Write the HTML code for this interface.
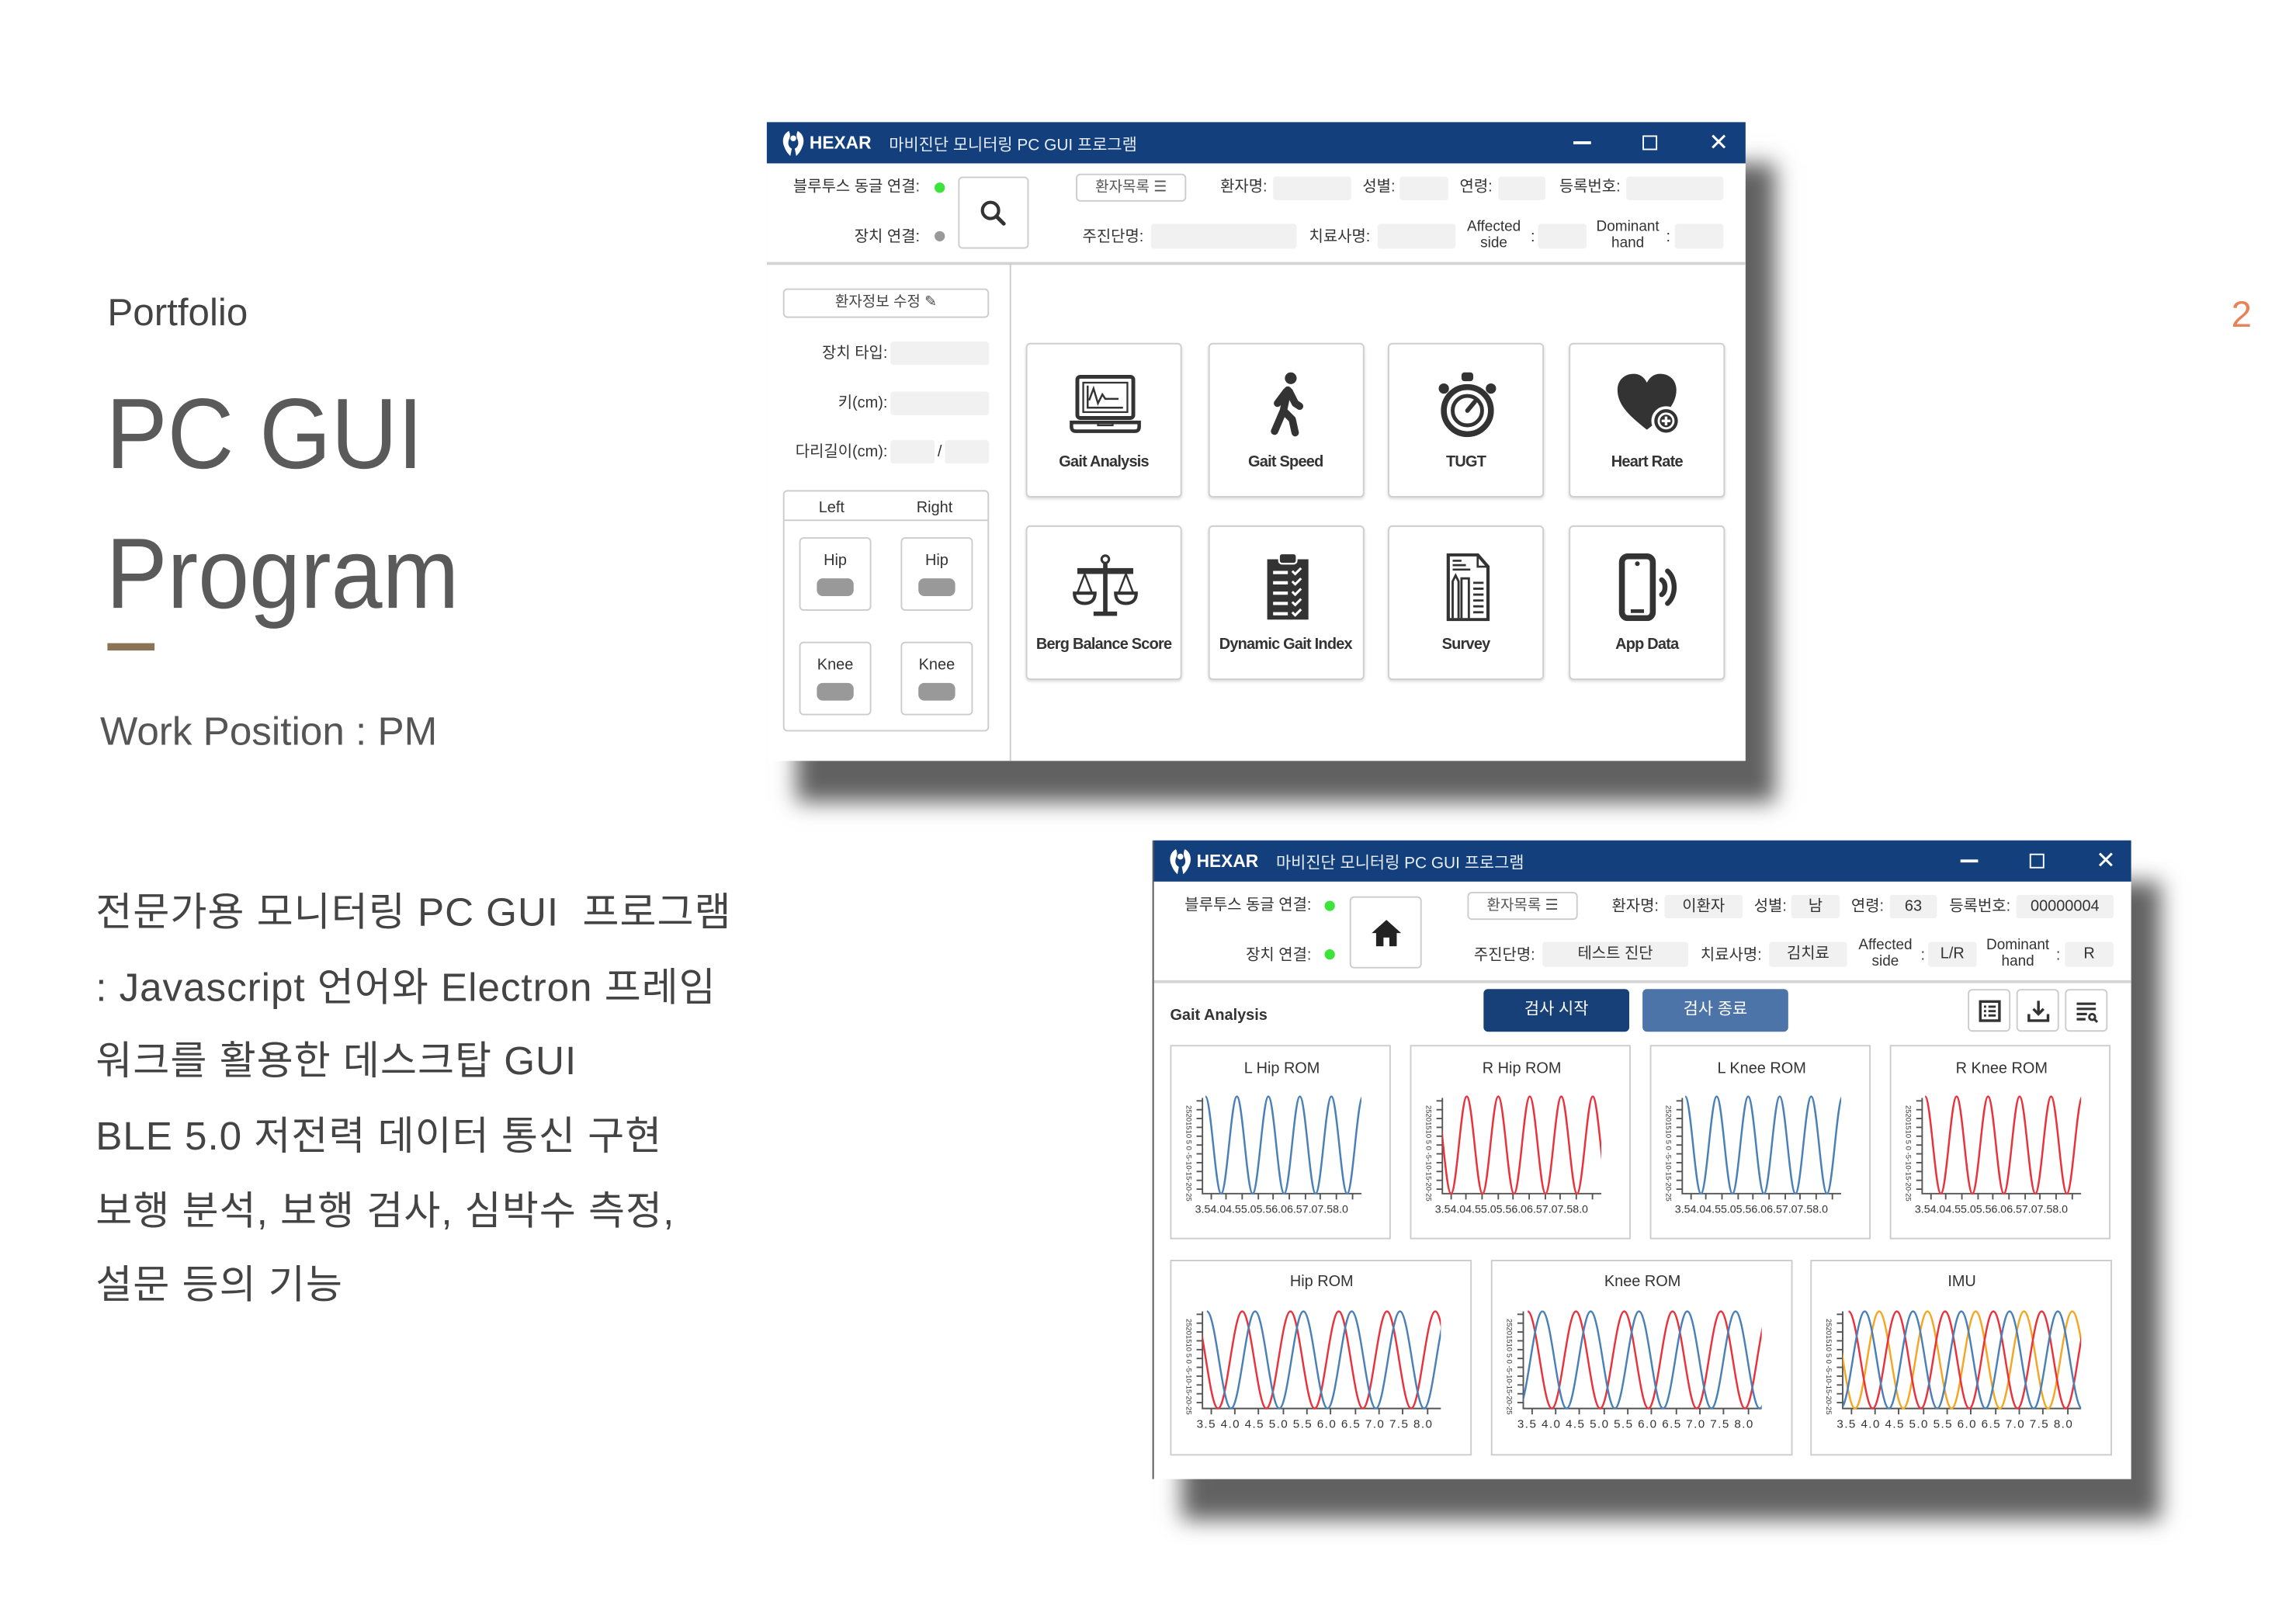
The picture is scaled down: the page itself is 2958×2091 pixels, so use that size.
<!DOCTYPE html>
<html><head><meta charset="utf-8">
<style>
*{margin:0;padding:0;box-sizing:border-box}
html,body{width:2958px;height:2090px;overflow:hidden;background:#fff}
#s{position:absolute;left:0;top:0;width:1560px;height:1103px;transform:scale(1.89615);transform-origin:0 0;font-family:"Liberation Sans","Noto Sans CJK KR",sans-serif;color:#333}
.a{position:absolute}
.w{position:absolute;width:665px;height:434px;background:#fff;box-shadow:20px 28px 14px rgba(0,0,0,.62)}
.tb{position:absolute;left:0;top:0;width:100%;height:28px;background:#143f7d;color:#fff}
.lb{position:absolute;font-size:10.5px;white-space:nowrap;line-height:12px;color:#333}
.r{text-align:right}
.in{position:absolute;background:#f1f1f1;border-radius:2px;font-size:10.5px;text-align:center;color:#333}
.bx{position:absolute;border:1.2px solid #ccc;border-radius:3px;background:#fff}
.tile{position:absolute;width:106px;height:105px;border:1.3px solid #cfcfcf;border-radius:3px;background:#fff;box-shadow:0 1px 2px rgba(0,0,0,.15)}
.tile svg{position:absolute;left:28px;top:18px}
.tile span{position:absolute;left:0;width:100%;top:74px;text-align:center;font-size:10.5px;font-weight:bold;color:#333;letter-spacing:-.4px}
.dot{position:absolute;width:7px;height:7px;border-radius:50%}
.pill{position:absolute;width:25px;height:12px;border-radius:4px;background:#999}
.ch{position:absolute;border:1.3px solid #ccc;background:#fff}
.kr{font-size:27px;color:#444;position:absolute;left:65px;white-space:nowrap;letter-spacing:.5px}
.big{position:absolute;left:72px;font-size:68px;color:#5a5a5a;line-height:80px;transform:scaleX(.92);transform-origin:0 0}
</style></head><body><div id="s">

<div class="a" style="left:73px;top:197px;font-size:26px;color:#444">Portfolio</div>
<div class="big" style="top:255px">PC GUI</div>
<div class="big" style="top:350px">Program</div>
<div class="a" style="left:73px;top:437px;width:32px;height:5px;background:#8b7355"></div>
<div class="a" style="left:68px;top:482px;font-size:27px;color:#555">Work Position : PM</div>
<div class="kr" style="top:598px">전문가용 모니터링 PC GUI &nbsp;프로그램</div>
<div class="kr" style="top:649px">: Javascript 언어와 Electron 프레임</div>
<div class="kr" style="top:699px">워크를 활용한 데스크탑 GUI</div>
<div class="kr" style="top:750px">BLE 5.0 저전력 데이터 통신 구현</div>
<div class="kr" style="top:801px">보행 분석, 보행 검사, 심박수 측정,</div>
<div class="kr" style="top:851px">설문 등의 기능</div>
<div class="a" style="left:1516px;top:200px;font-size:25px;color:#e8825a">2</div>

<!-- WINDOW 1 -->
<div class="w" style="left:521px;top:83px">
 <div class="tb">
  <svg class="a" style="left:10px;top:5px" width="16" height="19" viewBox="0 0 16 19"><path d="M5 1C1 3 0 8 2 12c1 3 3 5 4 6l1-5c-2-1-3-3-2-6 1-2 1-4 0-6zM11 1c4 2 5 7 3 11-1 3-3 5-4 6l-1-5c2-1 3-3 2-6-1-2-1-4 0-6z" fill="#fff"/><circle cx="8" cy="6" r="2" fill="#fff"/></svg>
  <div class="a" style="left:29px;top:7px;font-size:12px;font-weight:bold">HEXAR</div>
  <div class="a" style="left:83px;top:7px;font-size:11px;color:#e8eef8">마비진단 모니터링 PC GUI 프로그램</div>
  <div class="a" style="left:548px;top:13px;width:12px;height:1.5px;background:#fff"></div>
  <div class="a" style="left:595px;top:9px;width:10px;height:10px;border:1.5px solid #fff"></div>
  <div class="a" style="left:640px;top:4px;font-size:16px">✕</div>
 </div>
 <div class="lb r" style="left:0;width:104px;top:38px">블루투스 동글 연결:</div>
 <div class="dot" style="left:114px;top:41px;background:#3be33b"></div>
 <div class="lb r" style="left:0;width:104px;top:72px">장치 연결:</div>
 <div class="dot" style="left:114px;top:74px;background:#999"></div>
 <div class="bx" style="left:130px;top:37px;width:48px;height:49px"><svg class="a" style="left:13px;top:14px" width="20" height="20" viewBox="0 0 20 20"><circle cx="8" cy="8" r="5.5" fill="none" stroke="#333" stroke-width="2.2"/><path d="M12 12l5 5" stroke="#333" stroke-width="2.6" stroke-linecap="round"/></svg></div>
 <div class="bx" style="left:210px;top:35px;width:75px;height:19px;font-size:10px;text-align:center;line-height:17px;color:#555">환자목록 ☰</div>
 <div class="lb r" style="left:290px;width:50px;top:38px">환자명:</div><div class="in" style="left:344px;top:37px;width:53px;height:16px"></div>
 <div class="lb r" style="left:397px;width:30px;top:38px">성별:</div><div class="in" style="left:430px;top:37px;width:33px;height:16px"></div>
 <div class="lb r" style="left:463px;width:30px;top:38px">연령:</div><div class="in" style="left:497px;top:37px;width:32px;height:16px"></div>
 <div class="lb r" style="left:529px;width:51px;top:38px">등록번호:</div><div class="in" style="left:584px;top:37px;width:66px;height:16px"></div>
 <div class="lb r" style="left:200px;width:56px;top:72px">주진단명:</div><div class="in" style="left:261px;top:69px;width:99px;height:17px"></div>
 <div class="lb r" style="left:360px;width:50px;top:72px">치료사명:</div><div class="in" style="left:415px;top:69px;width:53px;height:17px"></div>
 <div class="lb" style="left:474px;width:40px;top:66px;text-align:center;line-height:11px;font-size:10px">Affected<br>side</div><div class="lb" style="left:519px;top:72px">:</div><div class="in" style="left:524px;top:69px;width:33px;height:17px"></div>
 <div class="lb" style="left:562px;width:46px;top:66px;text-align:center;line-height:11px;font-size:10px">Dominant<br>hand</div><div class="lb" style="left:611px;top:72px">:</div><div class="in" style="left:617px;top:69px;width:33px;height:17px"></div>
 <div class="a" style="left:0;top:95px;width:100%;height:1.5px;background:#d4d4d4"></div>
 <div class="a" style="left:165px;top:96px;width:1.2px;height:338px;background:#ccc"></div>
 <div class="bx" style="left:11px;top:113px;width:140px;height:20px;font-size:10px;text-align:center;line-height:18px;color:#444">환자정보 수정 ✎</div>
 <div class="lb r" style="left:0;width:82px;top:151px">장치 타입:</div><div class="in" style="left:84px;top:149px;width:67px;height:16px"></div>
 <div class="lb r" style="left:0;width:82px;top:185px">키(cm):</div><div class="in" style="left:84px;top:183px;width:67px;height:16px"></div>
 <div class="lb r" style="left:0;width:82px;top:218px">다리길이(cm):</div><div class="in" style="left:84px;top:216px;width:30px;height:16px"></div><div class="lb" style="left:116px;top:218px">/</div><div class="in" style="left:121px;top:216px;width:30px;height:16px"></div>
 <div class="bx" style="left:11px;top:250px;width:140px;height:164px">
  <div class="lb" style="left:12px;width:40px;top:5px;text-align:center">Left</div>
  <div class="lb" style="left:82px;width:40px;top:5px;text-align:center">Right</div>
  <div class="a" style="left:0;top:19px;width:138px;height:1.2px;background:#ccc"></div>
  <div class="bx" style="left:10px;top:31px;width:49px;height:50px"><div class="lb" style="width:100%;text-align:center;top:9px">Hip</div><div class="pill" style="left:11px;top:27px"></div></div>
  <div class="bx" style="left:79px;top:31px;width:49px;height:50px"><div class="lb" style="width:100%;text-align:center;top:9px">Hip</div><div class="pill" style="left:11px;top:27px"></div></div>
  <div class="bx" style="left:10px;top:102px;width:49px;height:50px"><div class="lb" style="width:100%;text-align:center;top:9px">Knee</div><div class="pill" style="left:11px;top:27px"></div></div>
  <div class="bx" style="left:79px;top:102px;width:49px;height:50px"><div class="lb" style="width:100%;text-align:center;top:9px">Knee</div><div class="pill" style="left:11px;top:27px"></div></div>
 </div>
 <div class="tile" style="left:176px;top:150px"><svg width="50" height="46" viewBox="0 0 50 46"><rect x="6" y="4" width="38" height="28" rx="2" fill="none" stroke="#333" stroke-width="2.6"/><rect x="10" y="8" width="30" height="20" fill="none" stroke="#333" stroke-width="1.2"/><path d="M13 10v15h24M14 20l3-8 3 10 3-6 2 3h9" fill="none" stroke="#333" stroke-width="1.3"/><path d="M2 35h46v3c0 2-1 3-3 3H5c-2 0-3-1-3-3z" fill="none" stroke="#333" stroke-width="2.4"/><path d="M20 35v2h10v-2" fill="none" stroke="#333" stroke-width="1.2"/></svg><span>Gait Analysis</span></div>
 <div class="tile" style="left:299.5px;top:150px"><svg width="50" height="46" viewBox="0 0 50 46"><circle cx="27" cy="5" r="4" fill="#333"/><path d="M25 13l-3 14-6 14M22 27l6 6 2 9M24 14l-6 8M26 14l4 8 3 2" fill="none" stroke="#333" stroke-width="5" stroke-linecap="round" stroke-linejoin="round"/></svg><span>Gait Speed</span></div>
 <div class="tile" style="left:422px;top:150px"><svg width="50" height="46" viewBox="0 0 50 46"><rect x="21" y="1" width="8" height="6" rx="2" fill="#333"/><circle cx="25" cy="27" r="16" fill="none" stroke="#333" stroke-width="4"/><circle cx="25" cy="27" r="10" fill="none" stroke="#333" stroke-width="2.6"/><path d="M25 27l5-6" stroke="#333" stroke-width="3" stroke-linecap="round"/><circle cx="9" cy="12" r="3.5" fill="#333"/><circle cx="41" cy="12" r="3.5" fill="#333"/></svg><span>TUGT</span></div>
 <div class="tile" style="left:545px;top:150px"><svg width="50" height="46" viewBox="0 0 50 46"><path d="M24 40C14 32 4 24 4 13 4 6 9 2 15 2c4 0 7 2 9 6 2-4 5-6 9-6 6 0 11 4 11 11 0 11-10 19-20 27z" fill="#333"/><circle cx="37" cy="34" r="9" fill="#333" stroke="#fff" stroke-width="2"/><circle cx="37" cy="34" r="5" fill="none" stroke="#fff" stroke-width="1.5"/><path d="M37 31v6M34 34h6" stroke="#fff" stroke-width="1.8"/></svg><span>Heart Rate</span></div>
 <div class="tile" style="left:176px;top:274px"><svg width="50" height="46" viewBox="0 0 50 46"><circle cx="25" cy="4" r="2.5" fill="none" stroke="#333" stroke-width="1.6"/><path d="M25 7v33M17 41h16" stroke="#333" stroke-width="3"/><rect x="6" y="10" width="38" height="4" fill="#333"/><path d="M11 14l-5 13M11 14l5 13M39 14l-5 13M39 14l5 13" stroke="#333" stroke-width="1.3"/><path d="M4 27h14c0 5-3 7-7 7s-7-2-7-7zM32 27h14c0 5-3 7-7 7s-7-2-7-7z" fill="none" stroke="#333" stroke-width="2.2"/></svg><span>Berg Balance Score</span></div>
 <div class="tile" style="left:299.5px;top:274px"><svg width="50" height="46" viewBox="0 0 50 46"><rect x="11" y="4" width="28" height="41" fill="#333"/><rect x="19" y="0" width="12" height="7" rx="2" fill="#333" stroke="#fff" stroke-width="1.2"/><path d="M15 13h10M15 20h10M15 27h10M15 34h10M15 41h10" stroke="#fff" stroke-width="2.2"/><path d="M28 12l2 2 4-4M28 19l2 2 4-4M28 26l2 2 4-4M28 33l2 2 4-4M28 40l2 2 4-4" fill="none" stroke="#fff" stroke-width="1.6"/></svg><span>Dynamic Gait Index</span></div>
 <div class="tile" style="left:422px;top:274px"><svg width="50" height="46" viewBox="0 0 50 46"><path d="M12 1h20l7 8v36H12z" fill="none" stroke="#333" stroke-width="2.2"/><path d="M32 1v8h7M15 5h6M15 8h9M15 11h12" stroke="#333" stroke-width="1.4" fill="none"/><path d="M15 44V19l2-4 2 4v25M21 44V17h5v27M29 20h7M29 24h7M29 28h7M29 32h7M29 36h7M29 40h7" stroke="#333" stroke-width="1.5" fill="none"/></svg><span>Survey</span></div>
 <div class="tile" style="left:545px;top:274px"><svg width="50" height="46" viewBox="0 0 50 46"><rect x="7" y="2" width="21" height="42" rx="4" fill="none" stroke="#333" stroke-width="4"/><circle cx="17.5" cy="7" r="1.6" fill="#333"/><rect x="13" y="38" width="9" height="2.5" fill="#333"/><path d="M34 18c3 2 3 8 0 10M38 12c6 5 6 17 0 22" fill="none" stroke="#333" stroke-width="3.4" stroke-linecap="round"/></svg><span>App Data</span></div>
</div>

<!-- WINDOW 2 -->
<div class="w" style="left:783px;top:571px;border-left:1.3px solid #555">
 <div class="tb">
  <svg class="a" style="left:10px;top:5px" width="16" height="19" viewBox="0 0 16 19"><path d="M5 1C1 3 0 8 2 12c1 3 3 5 4 6l1-5c-2-1-3-3-2-6 1-2 1-4 0-6zM11 1c4 2 5 7 3 11-1 3-3 5-4 6l-1-5c2-1 3-3 2-6-1-2-1-4 0-6z" fill="#fff"/><circle cx="8" cy="6" r="2" fill="#fff"/></svg>
  <div class="a" style="left:29px;top:7px;font-size:12px;font-weight:bold">HEXAR</div>
  <div class="a" style="left:83px;top:7px;font-size:11px;color:#e8eef8">마비진단 모니터링 PC GUI 프로그램</div>
  <div class="a" style="left:548px;top:13px;width:12px;height:1.5px;background:#fff"></div>
  <div class="a" style="left:595px;top:9px;width:10px;height:10px;border:1.5px solid #fff"></div>
  <div class="a" style="left:640px;top:4px;font-size:16px">✕</div>
 </div>
 <div class="lb r" style="left:0;width:107px;top:38px">블루투스 동글 연결:</div>
 <div class="dot" style="left:116px;top:41px;background:#3be33b"></div>
 <div class="lb r" style="left:0;width:107px;top:72px">장치 연결:</div>
 <div class="dot" style="left:116px;top:74px;background:#3be33b"></div>
 <div class="bx" style="left:133px;top:38px;width:49px;height:49px"><svg class="a" style="left:14px;top:15px" width="20" height="18" viewBox="0 0 20 18"><path d="M10 0L0 9h3v9h5v-6h4v6h5V9h3z" fill="#222"/></svg></div>
 <div class="bx" style="left:213px;top:35px;width:75px;height:19px;font-size:10px;text-align:center;line-height:17px;color:#555">환자목록 ☰</div>
 <div class="lb r" style="left:293px;width:50px;top:39px">환자명:</div><div class="in" style="left:347px;top:37px;width:53px;height:16px;line-height:16px">이환자</div>
 <div class="lb r" style="left:400px;width:30px;top:39px">성별:</div><div class="in" style="left:433px;top:37px;width:33px;height:16px;line-height:16px">남</div>
 <div class="lb r" style="left:466px;width:30px;top:39px">연령:</div><div class="in" style="left:500px;top:37px;width:32px;height:16px;line-height:16px">63</div>
 <div class="lb r" style="left:532px;width:50px;top:39px">등록번호:</div><div class="in" style="left:586px;top:37px;width:66px;height:16px;line-height:16px">00000004</div>
 <div class="lb r" style="left:203px;width:56px;top:72px">주진단명:</div><div class="in" style="left:264px;top:69px;width:99px;height:17px;line-height:17px">테스트 진단</div>
 <div class="lb r" style="left:363px;width:50px;top:72px">치료사명:</div><div class="in" style="left:418px;top:69px;width:53px;height:17px;line-height:17px">김치료</div>
 <div class="lb" style="left:477px;width:40px;top:66px;text-align:center;line-height:11px;font-size:10px">Affected<br>side</div><div class="lb" style="left:521px;top:72px">:</div><div class="in" style="left:526px;top:69px;width:33px;height:17px;line-height:17px">L/R</div>
 <div class="lb" style="left:564px;width:46px;top:66px;text-align:center;line-height:11px;font-size:10px">Dominant<br>hand</div><div class="lb" style="left:613px;top:72px">:</div><div class="in" style="left:619px;top:69px;width:33px;height:17px;line-height:17px">R</div>
 <div class="a" style="left:0;top:95px;width:100%;height:1.5px;background:#d4d4d4"></div>
 <div class="lb" style="left:11px;top:113px;font-weight:bold;font-size:10.5px">Gait Analysis</div>
 <div class="a" style="left:224px;top:101px;width:99px;height:29px;background:#173f78;border-radius:3px;color:#fff;font-size:11px;text-align:center;line-height:29px">검사 시작</div>
 <div class="a" style="left:332px;top:101px;width:99px;height:29px;background:#4d74a8;border-radius:3px;color:#fff;font-size:11px;text-align:center;line-height:29px">검사 종료</div>
 <div class="bx" style="left:553px;top:101px;width:29px;height:29px"><svg class="a" style="left:6px;top:6px" width="16" height="16" viewBox="0 0 16 16"><rect x="1.5" y="1.5" width="13" height="13" fill="none" stroke="#333" stroke-width="1.8"/><path d="M4 5h1.5M4 8h1.5M4 11h1.5M7 5h5M7 8h5M7 11h5" stroke="#333" stroke-width="1.5"/></svg></div>
 <div class="bx" style="left:586px;top:101px;width:29px;height:29px"><svg class="a" style="left:6px;top:6px" width="16" height="16" viewBox="0 0 16 16"><path d="M8 1v9M4.5 6.5L8 10l3.5-3.5M1.5 10v4.5h13V10" fill="none" stroke="#333" stroke-width="1.8"/></svg></div>
 <div class="bx" style="left:619px;top:101px;width:29px;height:29px"><svg class="a" style="left:6px;top:6px" width="16" height="16" viewBox="0 0 16 16"><path d="M1 3h13M1 6.5h13M1 10h7M1 13.5h6" stroke="#333" stroke-width="1.7"/><circle cx="11.5" cy="12" r="2" fill="none" stroke="#333" stroke-width="1.5"/><path d="M13 13.5l2 2" stroke="#333" stroke-width="1.6"/></svg></div>

 <div class="ch" style="left:11px;top:139px;width:150px;height:132px"><svg width="150" height="132" font-family="Liberation Sans" font-size="10.5" fill="#333">
  <text x="75" y="18" text-anchor="middle">L Hip ROM</text>
  <path fill="none" stroke="#555" stroke-width="1" d="M21 35v65h108M17 37h4M17 43h4M17 49h4M17 55h4M17 61h4M17 67h4M17 73h4M17 79h4M17 85h4M17 91h4M17 97h4M27 100v4M37 100v4M48 100v4M59 100v4M69 100v4M80 100v4M91 100v4M101 100v4M112 100v4M123 100v4"/>
  <text x="10" y="40" font-size="5" transform="rotate(90 10 40)">25201510 5 0 -5-10-15-20-25</text>
  <text x="16" y="113" font-size="7.5" textLength="104" lengthAdjust="spacingAndGlyphs">3.54.04.55.05.56.06.57.07.58.0</text>
  <svg x="21" y="32" width="108" height="70"><path d="M2,2 c3.85,0 6.85,66 10.7,66 s6.85,-66 10.7,-66 s6.85,66 10.7,66 s6.85,-66 10.7,-66 s6.85,66 10.7,66 s6.85,-66 10.7,-66 s6.85,66 10.7,66 s6.85,-66 10.7,-66 s6.85,66 10.7,66 s6.85,-66 10.7,-66 s6.85,66 10.7,66" fill="none" stroke="#4a80b8" stroke-width="1.3"/></svg>
 </svg></div>
 <div class="ch" style="left:174px;top:139px;width:150px;height:132px"><svg width="150" height="132" font-family="Liberation Sans" font-size="10.5" fill="#333">
  <text x="75" y="18" text-anchor="middle">R Hip ROM</text>
  <path fill="none" stroke="#555" stroke-width="1" d="M21 35v65h108M17 37h4M17 43h4M17 49h4M17 55h4M17 61h4M17 67h4M17 73h4M17 79h4M17 85h4M17 91h4M17 97h4M27 100v4M37 100v4M48 100v4M59 100v4M69 100v4M80 100v4M91 100v4M101 100v4M112 100v4M123 100v4"/>
  <text x="10" y="40" font-size="5" transform="rotate(90 10 40)">25201510 5 0 -5-10-15-20-25</text>
  <text x="16" y="113" font-size="7.5" textLength="104" lengthAdjust="spacingAndGlyphs">3.54.04.55.05.56.06.57.07.58.0</text>
  <svg x="21" y="32" width="108" height="70"><path d="M-4.8,2 c3.85,0 6.85,66 10.7,66 s6.85,-66 10.7,-66 s6.85,66 10.7,66 s6.85,-66 10.7,-66 s6.85,66 10.7,66 s6.85,-66 10.7,-66 s6.85,66 10.7,66 s6.85,-66 10.7,-66 s6.85,66 10.7,66 s6.85,-66 10.7,-66 s6.85,66 10.7,66" fill="none" stroke="#e8323c" stroke-width="1.3"/></svg>
 </svg></div>
 <div class="ch" style="left:337px;top:139px;width:150px;height:132px"><svg width="150" height="132" font-family="Liberation Sans" font-size="10.5" fill="#333">
  <text x="75" y="18" text-anchor="middle">L Knee ROM</text>
  <path fill="none" stroke="#555" stroke-width="1" d="M21 35v65h108M17 37h4M17 43h4M17 49h4M17 55h4M17 61h4M17 67h4M17 73h4M17 79h4M17 85h4M17 91h4M17 97h4M27 100v4M37 100v4M48 100v4M59 100v4M69 100v4M80 100v4M91 100v4M101 100v4M112 100v4M123 100v4"/>
  <text x="10" y="40" font-size="5" transform="rotate(90 10 40)">25201510 5 0 -5-10-15-20-25</text>
  <text x="16" y="113" font-size="7.5" textLength="104" lengthAdjust="spacingAndGlyphs">3.54.04.55.05.56.06.57.07.58.0</text>
  <svg x="21" y="32" width="108" height="70"><path d="M2,2 c3.85,0 6.85,66 10.7,66 s6.85,-66 10.7,-66 s6.85,66 10.7,66 s6.85,-66 10.7,-66 s6.85,66 10.7,66 s6.85,-66 10.7,-66 s6.85,66 10.7,66 s6.85,-66 10.7,-66 s6.85,66 10.7,66 s6.85,-66 10.7,-66 s6.85,66 10.7,66" fill="none" stroke="#4a80b8" stroke-width="1.3"/></svg>
 </svg></div>
 <div class="ch" style="left:500px;top:139px;width:150px;height:132px"><svg width="150" height="132" font-family="Liberation Sans" font-size="10.5" fill="#333">
  <text x="75" y="18" text-anchor="middle">R Knee ROM</text>
  <path fill="none" stroke="#555" stroke-width="1" d="M21 35v65h108M17 37h4M17 43h4M17 49h4M17 55h4M17 61h4M17 67h4M17 73h4M17 79h4M17 85h4M17 91h4M17 97h4M27 100v4M37 100v4M48 100v4M59 100v4M69 100v4M80 100v4M91 100v4M101 100v4M112 100v4M123 100v4"/>
  <text x="10" y="40" font-size="5" transform="rotate(90 10 40)">25201510 5 0 -5-10-15-20-25</text>
  <text x="16" y="113" font-size="7.5" textLength="104" lengthAdjust="spacingAndGlyphs">3.54.04.55.05.56.06.57.07.58.0</text>
  <svg x="21" y="32" width="108" height="70"><path d="M2,2 c3.85,0 6.85,66 10.7,66 s6.85,-66 10.7,-66 s6.85,66 10.7,66 s6.85,-66 10.7,-66 s6.85,66 10.7,66 s6.85,-66 10.7,-66 s6.85,66 10.7,66 s6.85,-66 10.7,-66 s6.85,66 10.7,66 s6.85,-66 10.7,-66 s6.85,66 10.7,66" fill="none" stroke="#e8323c" stroke-width="1.3"/></svg>
 </svg></div>

 <div class="ch" style="left:11px;top:285px;width:205px;height:133px"><svg width="205" height="133" font-family="Liberation Sans" font-size="10.5" fill="#333">
  <text x="102" y="17" text-anchor="middle">Hip ROM</text>
  <path fill="none" stroke="#555" stroke-width="1" d="M21 34v66h162M17 36h4M17 42h4M17 48h4M17 54h4M17 60h4M17 66h4M17 72h4M17 78h4M17 84h4M17 90h4M17 96h4M27 100v4M43 100v4M59 100v4M76 100v4M92 100v4M108 100v4M125 100v4M141 100v4M157 100v4M174 100v4"/>
  <text x="10" y="39" font-size="5" transform="rotate(90 10 39)">25201510 5 0 -5-10-15-20-25</text>
  <text x="17" y="113" font-size="8" textLength="160" lengthAdjust="spacing">3.5 4.0 4.5 5.0 5.5 6.0 6.5 7.0 7.5 8.0</text>
  <svg x="21" y="32" width="162" height="70">
   <path d="M-5.8,2 c5.9,0 10.5,66 16.4,66 s10.5,-66 16.4,-66 s10.5,66 16.4,66 s10.5,-66 16.4,-66 s10.5,66 16.4,66 s10.5,-66 16.4,-66 s10.5,66 16.4,66 s10.5,-66 16.4,-66 s10.5,66 16.4,66 s10.5,-66 16.4,-66 s10.5,66 16.4,66 s10.5,-66 16.4,-66" fill="none" stroke="#e8323c" stroke-width="1.3"/>
   <path d="M3,2 c5.9,0 10.5,66 16.4,66 s10.5,-66 16.4,-66 s10.5,66 16.4,66 s10.5,-66 16.4,-66 s10.5,66 16.4,66 s10.5,-66 16.4,-66 s10.5,66 16.4,66 s10.5,-66 16.4,-66 s10.5,66 16.4,66 s10.5,-66 16.4,-66 s10.5,66 16.4,66" fill="none" stroke="#4a80b8" stroke-width="1.3"/>
  </svg>
 </svg></div>
 <div class="ch" style="left:229px;top:285px;width:205px;height:133px"><svg width="205" height="133" font-family="Liberation Sans" font-size="10.5" fill="#333">
  <text x="102" y="17" text-anchor="middle">Knee ROM</text>
  <path fill="none" stroke="#555" stroke-width="1" d="M21 34v66h162M17 36h4M17 42h4M17 48h4M17 54h4M17 60h4M17 66h4M17 72h4M17 78h4M17 84h4M17 90h4M17 96h4M27 100v4M43 100v4M59 100v4M76 100v4M92 100v4M108 100v4M125 100v4M141 100v4M157 100v4M174 100v4"/>
  <text x="10" y="39" font-size="5" transform="rotate(90 10 39)">25201510 5 0 -5-10-15-20-25</text>
  <text x="17" y="113" font-size="8" textLength="160" lengthAdjust="spacing">3.5 4.0 4.5 5.0 5.5 6.0 6.5 7.0 7.5 8.0</text>
  <svg x="21" y="32" width="162" height="70">
   <path d="M3,2 c5.9,0 10.5,66 16.4,66 s10.5,-66 16.4,-66 s10.5,66 16.4,66 s10.5,-66 16.4,-66 s10.5,66 16.4,66 s10.5,-66 16.4,-66 s10.5,66 16.4,66 s10.5,-66 16.4,-66 s10.5,66 16.4,66 s10.5,-66 16.4,-66 s10.5,66 16.4,66" fill="none" stroke="#e8323c" stroke-width="1.3"/>
   <path d="M13,2 c5.9,0 10.5,66 16.4,66 s10.5,-66 16.4,-66 s10.5,66 16.4,66 s10.5,-66 16.4,-66 s10.5,66 16.4,66 s10.5,-66 16.4,-66 s10.5,66 16.4,66 s10.5,-66 16.4,-66 s10.5,66 16.4,66 s10.5,-66 16.4,-66 s10.5,66 16.4,66" fill="none" stroke="#4a80b8" stroke-width="1.3"/>
   <path d="M-19.8,2 c5.9,0 10.5,66 16.4,66 s10.5,-66 16.4,-66" fill="none" stroke="#4a80b8" stroke-width="1.3"/>
  </svg>
 </svg></div>
 <div class="ch" style="left:446px;top:285px;width:205px;height:133px"><svg width="205" height="133" font-family="Liberation Sans" font-size="10.5" fill="#333">
  <text x="102" y="17" text-anchor="middle">IMU</text>
  <path fill="none" stroke="#555" stroke-width="1" d="M21 34v66h162M17 36h4M17 42h4M17 48h4M17 54h4M17 60h4M17 66h4M17 72h4M17 78h4M17 84h4M17 90h4M17 96h4M27 100v4M43 100v4M59 100v4M76 100v4M92 100v4M108 100v4M125 100v4M141 100v4M157 100v4M174 100v4"/>
  <text x="10" y="39" font-size="5" transform="rotate(90 10 39)">25201510 5 0 -5-10-15-20-25</text>
  <text x="17" y="113" font-size="8" textLength="160" lengthAdjust="spacing">3.5 4.0 4.5 5.0 5.5 6.0 6.5 7.0 7.5 8.0</text>
  <svg x="21" y="32" width="162" height="70">
   <path d="M-8,2 c5.9,0 10.5,66 16.4,66 s10.5,-66 16.4,-66 s10.5,66 16.4,66 s10.5,-66 16.4,-66 s10.5,66 16.4,66 s10.5,-66 16.4,-66 s10.5,66 16.4,66 s10.5,-66 16.4,-66 s10.5,66 16.4,66 s10.5,-66 16.4,-66 s10.5,66 16.4,66 s10.5,-66 16.4,-66" fill="none" stroke="#f5a623" stroke-width="1.3"/>
   <path d="M4,2 c5.9,0 10.5,66 16.4,66 s10.5,-66 16.4,-66 s10.5,66 16.4,66 s10.5,-66 16.4,-66 s10.5,66 16.4,66 s10.5,-66 16.4,-66 s10.5,66 16.4,66 s10.5,-66 16.4,-66 s10.5,66 16.4,66 s10.5,-66 16.4,-66 s10.5,66 16.4,66" fill="none" stroke="#e8323c" stroke-width="1.3"/>
   <path d="M15,2 c5.9,0 10.5,66 16.4,66 s10.5,-66 16.4,-66 s10.5,66 16.4,66 s10.5,-66 16.4,-66 s10.5,66 16.4,66 s10.5,-66 16.4,-66 s10.5,66 16.4,66 s10.5,-66 16.4,-66 s10.5,66 16.4,66 s10.5,-66 16.4,-66 s10.5,66 16.4,66" fill="none" stroke="#4a80b8" stroke-width="1.3"/>
   <path d="M-17.8,2 c5.9,0 10.5,66 16.4,66 s10.5,-66 16.4,-66" fill="none" stroke="#4a80b8" stroke-width="1.3"/>
  </svg>
 </svg></div>
</div>

</div></body></html>
